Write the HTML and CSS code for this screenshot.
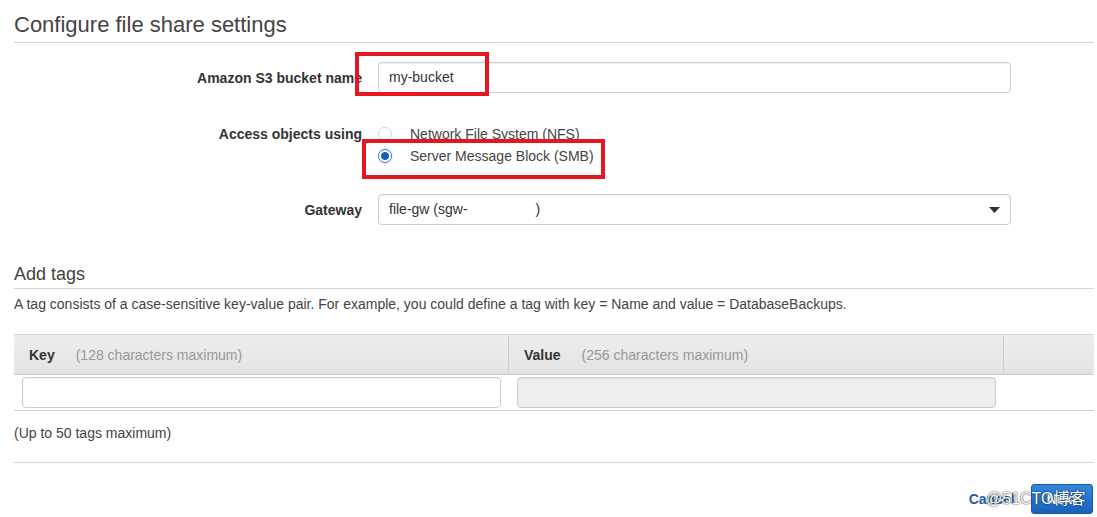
FILE: index.html
```html
<!DOCTYPE html>
<html lang="en">
<head>
<meta charset="utf-8">
<title>Configure file share settings</title>
<link rel="stylesheet" href="styles.css">
</head>
<body>
<div class="page">
  <h1 class="title">Configure file share settings</h1>

  <div class="form-row row-bucket">
    <div class="label">Amazon S3 bucket name</div>
    <div class="control"><div class="input">my-bucket</div></div>
  </div>

  <div class="form-row row-access">
    <div class="label label-top">Access objects using</div>
    <div class="control radios">
      <div class="radio"><span class="dot"></span><span>Network File System (NFS)</span></div>
      <div class="radio"><span class="dot checked"></span><span>Server Message Block (SMB)</span></div>
    </div>
  </div>

  <div class="form-row row-gateway">
    <div class="label">Gateway</div>
    <div class="control">
      <div class="input select">
        <span>file-gw (sgw-<span class="blank"></span>)</span>
        <svg class="caret" width="11" height="6" viewBox="0 0 11 6"><path d="M0 0H11L5.5 6Z" fill="#333"/></svg>
      </div>
    </div>
  </div>

  <h2 class="subtitle">Add tags</h2>
  <p class="desc">A tag consists of a case-sensitive key-value pair. For example, you could define a tag with key = Name and value = DatabaseBackups.</p>

  <div class="tags">
    <div class="thead">
      <div class="th"><b>Key</b><span class="note">(128 characters maximum)</span></div>
      <div class="th"><b>Value</b><span class="note">(256 characters maximum)</span></div>
      <div class="th th-last"></div>
    </div>
    <div class="trow">
      <div class="td"><div class="input"></div></div>
      <div class="td"><div class="input disabled"></div></div>
      <div class="td"></div>
    </div>
  </div>

  <p class="limit">(Up to 50 tags maximum)</p>

  <div class="footer">
    <a class="cancel">Cancel</a>
    <button class="btn">Next</button>
  </div>

  <div class="mark mark-bucket"></div>
  <div class="mark mark-smb"></div>
  <div class="watermark">@51CTO博客</div>
</div>
</body>
</html>
```

FILE: styles.css
```css
html, body {
  margin: 0;
  padding: 0;
  background: #fff;
}
body {
  font-family: "Liberation Sans", Arial, "Noto Sans CJK SC", sans-serif;
  font-size: 14px;
  color: #444;
  overflow: hidden;
}
.page {
  position: relative;
  width: 1080px;
  padding: 12px 0 0 14px;
  height: 505px;
}
.title {
  margin: 0;
  padding-bottom: 4px;
  font-size: 22px;
  line-height: 26px;
  font-weight: normal;
  color: #444;
  border-bottom: 1px solid #d5d5d5;
}
.form-row {
  display: grid;
  grid-template-columns: 348px 633px;
  column-gap: 16px;
  align-items: center;
}
.row-bucket { margin-top: 19px; }
.row-access { margin-top: 30px; align-items: start; }
.row-gateway { margin-top: 27px; }
.label {
  text-align: right;
  font-weight: bold;
  color: #333;
}
.label-top { line-height: 22px; }
.input {
  box-sizing: border-box;
  height: 31px;
  border: 1px solid #ccc;
  border-radius: 4px;
  padding: 0 10px;
  line-height: 29px;
  color: #333;
  background: #fff;
  box-shadow: inset 0 1px 1px rgba(0,0,0,0.06);
}
.radios { display: flex; flex-direction: column; }
.radio {
  display: flex;
  align-items: center;
  gap: 18px;
  height: 22px;
  color: #444;
}
.dot {
  box-sizing: border-box;
  width: 14px;
  height: 14px;
  border-radius: 50%;
  border: 1px solid #d4d4d4;
  background: #fff;
}
.dot.checked {
  border: 1px solid #3b7fc4;
  background: radial-gradient(circle, #1760c0 0 3.6px, #fff 4.4px);
  box-shadow: 0 0 2px rgba(30,100,190,0.4);
}
.select {
  display: flex;
  justify-content: space-between;
  align-items: center;
  padding-right: 10px;
}
.blank { display: inline-block; width: 68px; }
.subtitle {
  margin: 38px 0 0;
  padding-bottom: 3px;
  font-size: 18px;
  line-height: 22px;
  font-weight: normal;
  color: #444;
  border-bottom: 1px solid #d5d5d5;
}
.desc {
  margin: 5px 0 0;
  line-height: 20px;
}
.tags { margin-top: 20px; }
.thead {
  display: grid;
  grid-template-columns: 495px 495px 90px;
  height: 41px;
  box-sizing: border-box;
  border-top: 1px solid #d6d6d6;
  border-bottom: 1px solid #d0d0d0;
  background: linear-gradient(#eeeeee, #e3e3e3);
}
.th {
  display: flex;
  align-items: center;
  padding-left: 15px;
  border-right: 1px solid #cfcfcf;
}
.th-last { border-right: 0; }
.th b { color: #333; }
.note { margin-left: 21px; color: #999; }
.trow {
  display: grid;
  grid-template-columns: 495px 495px 90px;
  box-sizing: border-box;
  padding: 2px 0 2px;
  border-bottom: 1px solid #d0d0d0;
}
.td { padding: 0 8px; }
.input.disabled { background: #eee; }
.limit {
  margin: 12px 0 0;
  line-height: 20px;
  padding-bottom: 19px;
  border-bottom: 1px solid #d5d5d5;
}
.footer {
  display: flex;
  justify-content: flex-end;
  align-items: center;
  gap: 16px;
  margin-top: 21px;
  padding-right: 1px;
}
.cancel {
  font-weight: bold;
  color: #1f5ba6;
}
.btn {
  height: 30px;
  padding: 0 15px;
  font-family: inherit;
  font-size: 14px;
  font-weight: bold;
  color: #fff;
  border: 1px solid #1858a6;
  border-radius: 3px;
  background: linear-gradient(#3288dc, #1762bb);
}
.mark {
  position: absolute;
  box-sizing: border-box;
  border: 4px solid #e5161f;
}
.mark-bucket { left: 355px; top: 52px; width: 134px; height: 44px; }
.mark-smb { left: 362px; top: 139px; width: 243px; height: 40px; }
.watermark {
  position: absolute;
  left: 986px;
  top: 488px;
  font-size: 16px;
  line-height: 22px;
  color: #fff;
  text-shadow: 0 0 1px #222, 0 0 2px rgba(0,0,0,0.6);
  white-space: nowrap;
}
```
